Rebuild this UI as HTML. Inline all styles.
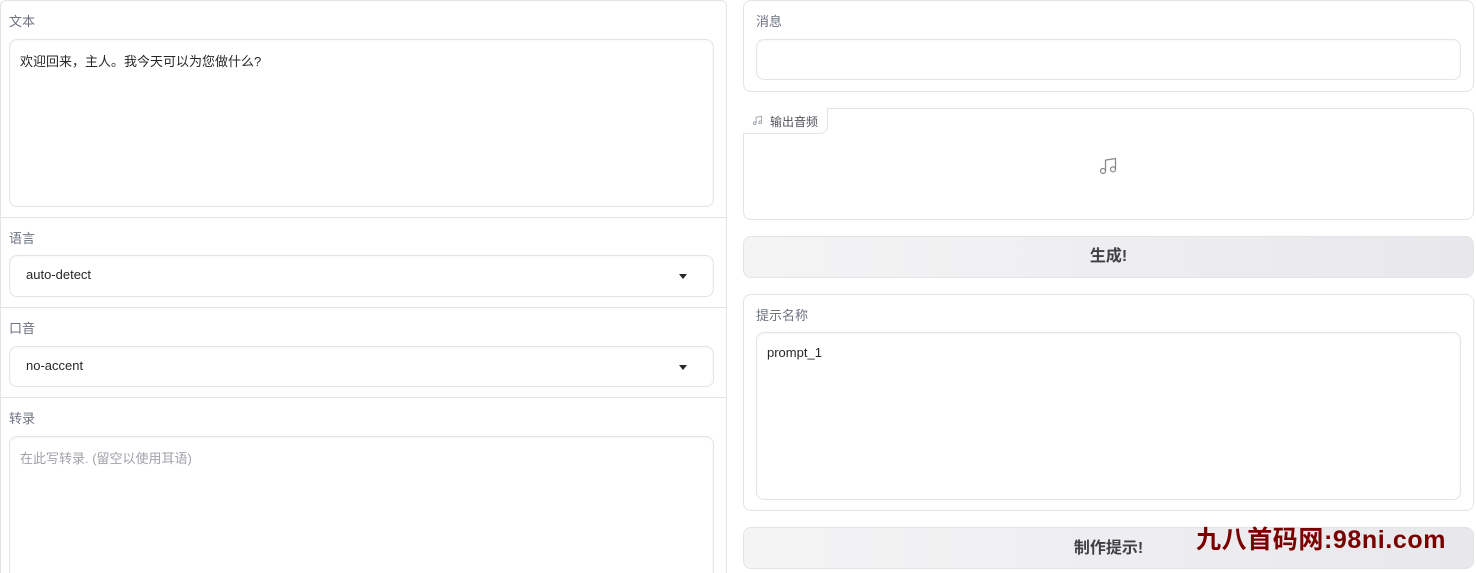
<!DOCTYPE html>
<html><head><meta charset="utf-8"><style>
*{box-sizing:border-box;margin:0;padding:0}
html,body{width:1476px;height:573px;overflow:hidden}
body{background:#fff;position:relative;font-family:"Liberation Sans","Noto Sans CJK SC",sans-serif;font-size:13px;color:#27272a}
.a{position:absolute}
.box{position:absolute;border:1px solid #e4e4e7;border-radius:8px;background:#fff}
.in{position:absolute;border:1px solid #e4e4e7;border-radius:8px;background:#fff;box-shadow:inset 0 1px 2px rgba(0,0,0,.04)}
.lbl{position:absolute;color:#6b7280;font-size:13px}
.hl{position:absolute;left:0;width:726px;height:1px;background:#e4e4e7}
.btn{position:absolute;border:1px solid #e4e4e7;border-radius:8px;background:linear-gradient(90deg,#f4f4f5,#e8e8ec);font-size:16px;font-weight:bold;color:#3f3f46;text-align:center}
.tri{position:absolute;width:0;height:0;border-left:4px solid transparent;border-right:4px solid transparent;border-top:5px solid #27272a}
</style></head><body>
<div class="box" style="left:0;top:0;width:727px;height:600px;border-radius:6px"></div>
<div class="lbl" style="left:9px;top:11px">文本</div>
<div class="in" style="left:9px;top:39px;width:705px;height:168px"></div>
<div class="a" style="left:20px;top:51px">欢迎回来，主人。我今天可以为您做什么?</div>
<div class="hl" style="top:217px"></div>
<div class="lbl" style="left:9px;top:228px">语言</div>
<div class="in" style="left:9px;top:255px;width:705px;height:42px"></div>
<div class="a" style="left:26px;top:267px">auto-detect</div>
<div class="tri" style="left:679px;top:274px"></div>
<div class="hl" style="top:307px"></div>
<div class="lbl" style="left:9px;top:318px">口音</div>
<div class="in" style="left:9px;top:346px;width:705px;height:41px"></div>
<div class="a" style="left:26px;top:358px">no-accent</div>
<div class="tri" style="left:679px;top:365px"></div>
<div class="hl" style="top:397px"></div>
<div class="lbl" style="left:9px;top:408px">转录</div>
<div class="in" style="left:9px;top:436px;width:705px;height:160px"></div>
<div class="a" style="left:20px;top:448px;color:#a1a1aa">在此写转录. (留空以使用耳语)</div>

<div class="box" style="left:743px;top:0;width:731px;height:92px"></div>
<div class="lbl" style="left:756px;top:11px">消息</div>
<div class="in" style="left:756px;top:39px;width:705px;height:41px"></div>

<div class="box" style="left:743px;top:108px;width:731px;height:112px"></div>
<div class="a" style="left:743px;top:108px;width:85px;height:26px;border:1px solid #e4e4e7;border-top:none;border-left:none;border-radius:0 0 8px 0;background:#fff"></div>
<svg class="a" style="left:752px;top:115px" width="11" height="11" viewBox="0 0 24 24" fill="none" stroke="#9ca3af" stroke-width="2"><path d="M9 18V5l12-2v13"/><circle cx="6" cy="18" r="3"/><circle cx="18" cy="16" r="3"/></svg>
<div class="a" style="left:770px;top:113px;font-size:12px;color:#52525b">输出音频</div>
<svg class="a" style="left:1098px;top:156px" width="20" height="20" viewBox="0 0 24 24" fill="none" stroke="#888" stroke-width="1.5"><path d="M9 18V5l12-2v13"/><circle cx="6" cy="18" r="3"/><circle cx="18" cy="16" r="3"/></svg>

<div class="btn" style="left:743px;top:236px;width:731px;height:42px;line-height:40px">生成!</div>

<div class="box" style="left:743px;top:294px;width:731px;height:217px"></div>
<div class="lbl" style="left:756px;top:305px">提示名称</div>
<div class="in" style="left:756px;top:332px;width:705px;height:168px"></div>
<div class="a" style="left:767px;top:345px">prompt_1</div>

<div class="btn" style="left:743px;top:527px;width:731px;height:42px;line-height:42px">制作提示!</div>
<div class="a" style="left:1196px;top:520px;font-size:25px;font-weight:bold;color:#7a0000;letter-spacing:0.6px">九八首码网:98ni.com</div>
</body></html>
